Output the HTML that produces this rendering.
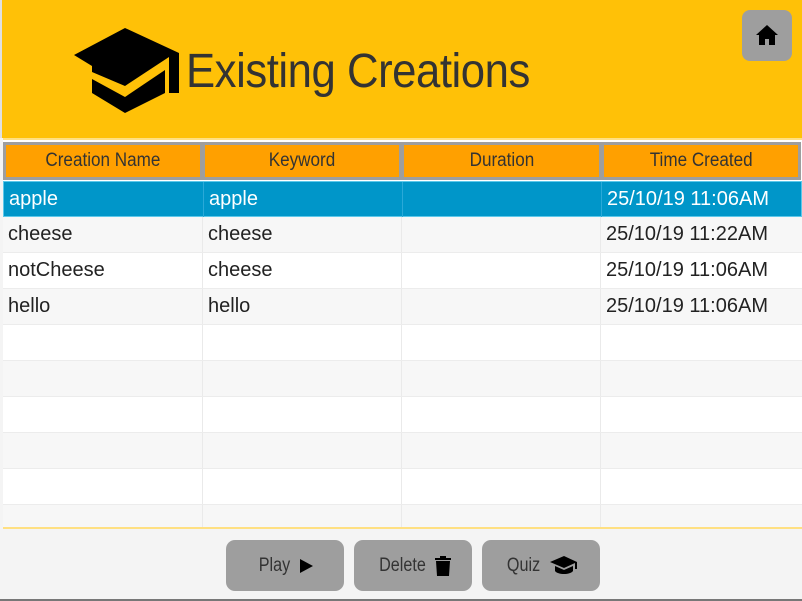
<!DOCTYPE html>
<html><head><style>
*{margin:0;padding:0;box-sizing:border-box}
body{width:802px;height:601px;background:#f4f4f4;font-family:"Liberation Sans",sans-serif;position:relative;overflow:hidden}
#hdr{position:absolute;left:0;top:0;width:802px;height:138px;background:#ffc107;border-left:2px solid #e0e0e0}
#title{position:absolute;left:186px;top:44px;font-size:48px;color:#333;transform:scaleX(0.91);transform-origin:left top;white-space:nowrap;letter-spacing:-0.5px}
#home{position:absolute;left:742px;top:10px;width:50px;height:51px;background:#9e9e9e;border-radius:8px}
#tbl{position:absolute;left:3px;top:138px;width:799px;height:391px;background:#fff;border-top:2px solid #ffe082;border-bottom:2px solid #ffe082}
.hr{position:absolute;top:142px;height:38px;background:#ffa000;border:3px solid #9e9e9e;color:#333;font-size:19px;text-align:center;line-height:32px}
.hr span{display:inline-block;transform:scaleX(0.9)}
.row{position:absolute;left:3px;width:799px;height:36px;font-size:20px;color:#222;border-bottom:1px solid #ececec}
.row div{position:absolute;top:0;height:35px;line-height:35px;padding-left:5px;border-right:1px solid #eaeaea}
.sel{background:#0096c9;color:#fff;border:1px solid #5cc8ea}
.sel div{border-right:1px solid #2aa9d8}
.btn{position:absolute;top:540px;width:118px;height:51px;background:#9e9e9e;border-radius:9px;color:#333;font-size:19px;line-height:51px;text-align:center}
.btn span{display:inline-block;transform:scaleX(0.85);vertical-align:middle}
.btn svg{vertical-align:middle;margin-left:6px}
</style></head><body>
<div id="hdr"></div>
<svg style="position:absolute;left:0;top:0" width="190" height="120" viewBox="0 0 190 120">
<polygon points="74,55 125,28 179,53 169,57 125,86 92,72 92,66" fill="#000"/>
<rect x="169" y="53" width="10" height="40" fill="#000"/>
<polygon points="92,79 125,97 165,70 165,93 125,113 92,93" fill="#000"/>
</svg>
<div id="title">Existing Creations</div>
<div id="home"><svg style="position:absolute;left:13px;top:14px" width="24" height="22" viewBox="0 0 24 22"><path d="M12 1L1 11h3v10h6v-6h4v6h6V11h3z" fill="#000"/></svg></div>
<div id="tbl"></div>
<div class="hr" style="left:3px;width:200px"><span>Creation Name</span></div>
<div class="hr" style="left:202px;width:200px"><span>Keyword</span></div>
<div class="hr" style="left:401px;width:201px"><span>Duration</span></div>
<div class="hr" style="left:601px;width:200px"><span>Time Created</span></div>

<div class="row sel" style="top:181px"><div style="left:0;width:200px">apple</div><div style="left:200px;width:199px">apple</div><div style="left:399px;width:199px"></div><div style="left:598px;width:199px;border:none">25/10/19 11:06AM</div></div>
<div class="row" style="top:217px;background:#f7f7f7"><div style="left:0;width:200px">cheese</div><div style="left:200px;width:199px">cheese</div><div style="left:399px;width:199px"></div><div style="left:598px;width:199px;border:none">25/10/19 11:22AM</div></div>
<div class="row" style="top:253px;background:#fff"><div style="left:0;width:200px">notCheese</div><div style="left:200px;width:199px">cheese</div><div style="left:399px;width:199px"></div><div style="left:598px;width:199px;border:none">25/10/19 11:06AM</div></div>
<div class="row" style="top:289px;background:#f7f7f7"><div style="left:0;width:200px">hello</div><div style="left:200px;width:199px">hello</div><div style="left:399px;width:199px"></div><div style="left:598px;width:199px;border:none">25/10/19 11:06AM</div></div>
<div class="row" style="top:325px;background:#fff"><div style="left:0;width:200px"></div><div style="left:200px;width:199px"></div><div style="left:399px;width:199px"></div></div>
<div class="row" style="top:361px;background:#f7f7f7"><div style="left:0;width:200px"></div><div style="left:200px;width:199px"></div><div style="left:399px;width:199px"></div></div>
<div class="row" style="top:397px;background:#fff"><div style="left:0;width:200px"></div><div style="left:200px;width:199px"></div><div style="left:399px;width:199px"></div></div>
<div class="row" style="top:433px;background:#f7f7f7"><div style="left:0;width:200px"></div><div style="left:200px;width:199px"></div><div style="left:399px;width:199px"></div></div>
<div class="row" style="top:469px;background:#fff"><div style="left:0;width:200px"></div><div style="left:200px;width:199px"></div><div style="left:399px;width:199px"></div></div>
<div class="row" style="top:505px;height:22px;background:#f7f7f7;border:none"><div style="left:0;width:200px;height:22px"></div><div style="left:200px;width:199px;height:22px"></div><div style="left:399px;width:199px;height:22px"></div></div>

<div class="btn" style="left:226px"><span>Play</span><svg width="16" height="16" viewBox="0 0 16 16"><path d="M2 1L15 8L2 15z" fill="#000"/></svg></div>
<div class="btn" style="left:354px"><span>Delete</span><svg width="16" height="20" viewBox="0 0 16 20"><path d="M5 0h6v2h5v2H0V2h5zM1 5h14l-1 15H2z" fill="#000"/></svg></div>
<div class="btn" style="left:482px"><span>Quiz</span><svg width="28" height="20" viewBox="0 0 28 20"><path d="M14 0L0 6l14 6 11-5v6h2V6z M5 10v5c3 4 15 4 18 0v-5l-9 4z" fill="#000"/></svg></div>
<div style="position:absolute;left:0;top:599px;width:802px;height:2px;background:#777"></div>
</body></html>
